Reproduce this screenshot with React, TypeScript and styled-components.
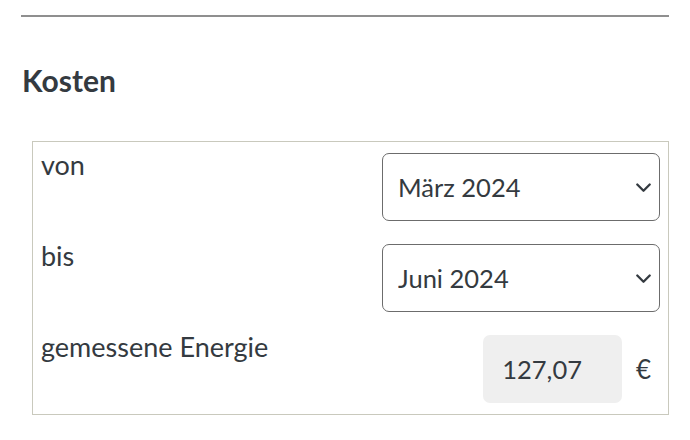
import React from "react";
import styled, { createGlobalStyle } from "styled-components";

const Global = createGlobalStyle`
  html, body { margin: 0; padding: 0; background: #fff; }
  body { font-family: Lato, "Open Sans", sans-serif; color: #343a40; }
  * { box-sizing: border-box; }
`;

const Page = styled.div`
  padding: 15px 21px 0 21px;
`;

const Rule = styled.hr`
  margin: 0;
  border: 0;
  height: 2px;
  background: #8f8f8f;
`;

const Heading = styled.h2`
  margin: 43px 0 0 1px;
  font-size: 30px;
  line-height: 40px;
  font-weight: 700;
  color: #343a40;
`;

const Box = styled.div`
  margin: 41px 0 0 11px;
  border: 1px solid #c9c9bd;
  padding: 11px 8px 11px 8px;
  display: grid;
  grid-template-columns: 1fr 278px;
  row-gap: 23px;
`;

const Label = styled.div`
  font-size: 27px;
  line-height: 24px;
  color: #343a40;
`;

const SelectWrap = styled.div`
  position: relative;
  height: 68px;
`;

const Select = styled.select`
  appearance: none;
  -webkit-appearance: none;
  width: 100%;
  height: 100%;
  border: 1px solid #6c6c6c;
  border-radius: 7px;
  background: #fff;
  padding: 0 40px 0 15px;
  font-family: Lato, "Open Sans", sans-serif;
  font-size: 25.5px;
  color: #343a40;
  outline: none;
`;

const Chevron = styled.svg`
  position: absolute;
  right: 9px;
  top: 30px;
  width: 15px;
  height: 10px;
  pointer-events: none;
`;

const OutputRow = styled.div`
  display: flex;
  align-items: center;
  justify-content: flex-end;
  gap: 14px;
`;

const Output = styled.div`
  width: 139px;
  height: 68px;
  border-radius: 7px;
  background: #efefef;
  display: flex;
  align-items: center;
  justify-content: flex-end;
  padding-right: 40px;
  font-size: 25.5px;
  color: #343a40;
`;

const Unit = styled.span`
  font-size: 26px;
  color: #343a40;
  width: 18px;
  margin-right: 6px;
`;

const months = ["Januar", "Februar", "März", "April", "Mai", "Juni", "Juli"];

function MonthSelect({ value }: { value: string }) {
  return (
    <SelectWrap>
      <Select defaultValue={value}>
        {months.map((m) => (
          <option key={m} value={`${m} 2024`}>
            {m} 2024
          </option>
        ))}
      </Select>
      <Chevron viewBox="0 0 15 10" fill="none">
        <path d="M1.3 1.5 L7.5 7.8 L13.7 1.5" stroke="#343a40" strokeWidth="2.3" strokeLinecap="round" strokeLinejoin="round" />
      </Chevron>
    </SelectWrap>
  );
}

export default function App() {
  return (
    <Page>
      <Global />
      <Rule />
      <Heading>Kosten</Heading>
      <Box>
        <Label>von</Label>
        <MonthSelect value="März 2024" />
        <Label>bis</Label>
        <MonthSelect value="Juni 2024" />
        <Label>gemessene Energie</Label>
        <OutputRow>
          <Output>127,07</Output>
          <Unit>€</Unit>
        </OutputRow>
      </Box>
    </Page>
  );
}
